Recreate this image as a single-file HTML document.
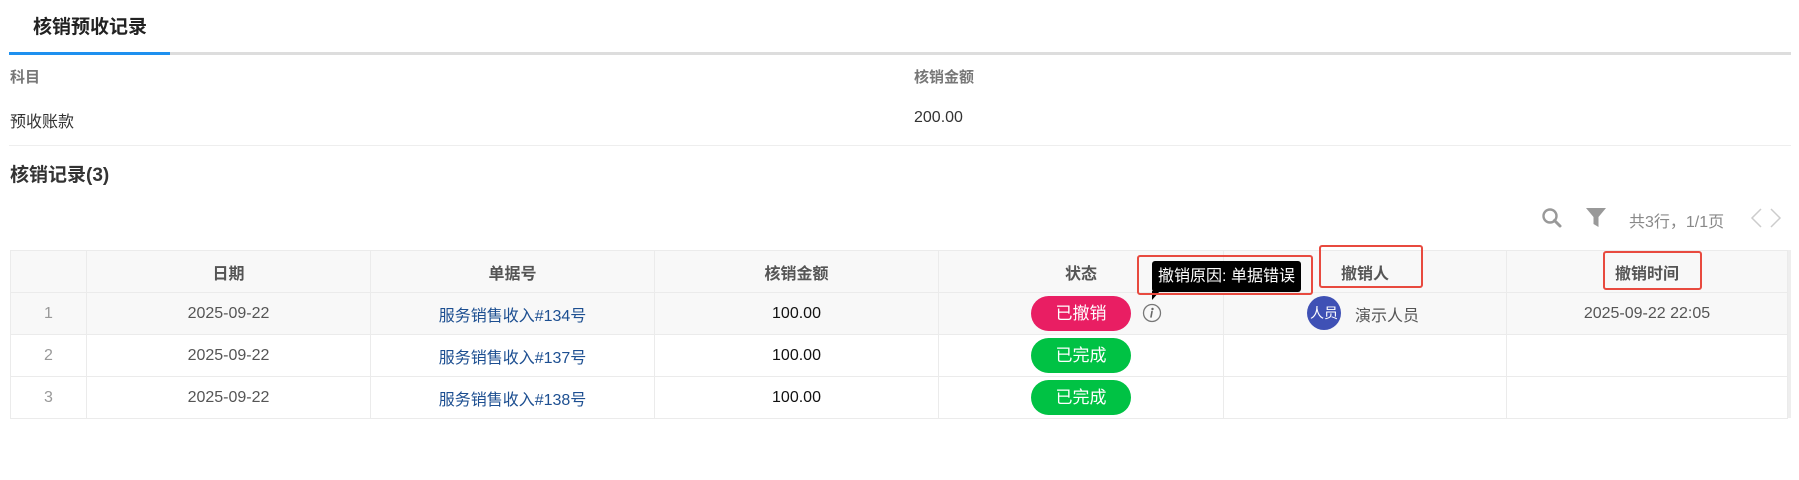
<!DOCTYPE html>
<html><head><meta charset="utf-8"><style>
*{margin:0;padding:0;box-sizing:border-box}
body{width:1799px;height:480px;background:#fff;font-family:"Liberation Sans","Noto Sans CJK SC",sans-serif;position:relative;overflow:hidden;color:#333}
.a{position:absolute;white-space:nowrap}
table{position:absolute;left:10px;top:250px;width:1777px;border-collapse:collapse;table-layout:fixed}
td,th{border:1px solid #ebebeb;height:42px;text-align:center;font-size:16px}
th{background:#f8f8f8;color:#555;font-weight:bold;font-size:16px}
tr.r1 td{background:#f8f8f8}
td.n{color:#999}
td.d{color:#555}
td.l{color:#1d4f91}
td.m{color:#111}
.b{display:inline-block;width:100px;height:35px;line-height:35px;border-radius:18px;color:#fff;font-size:17px}
.rb{position:absolute;border:2px solid #e84a3f;border-radius:3px}
</style></head><body>
<div class="a" style="left:33px;top:12px;font-size:19px;font-weight:bold;color:#222">核销预收记录</div>
<div class="a" style="left:9px;top:52px;width:1782px;height:3px;background:#ddd"></div>
<div class="a" style="left:9px;top:52px;width:161px;height:3px;background:#1e90ef"></div>
<div class="a" style="left:10px;top:66px;font-size:15px;font-weight:bold;color:#777">科目</div>
<div class="a" style="left:914px;top:66px;font-size:15px;font-weight:bold;color:#777">核销金额</div>
<div class="a" style="left:10px;top:108px;font-size:16px;color:#333">预收账款</div>
<div class="a" style="left:914px;top:109px;font-size:16px;color:#333">200.00</div>
<div class="a" style="left:9px;top:145px;width:1782px;height:1px;background:#eee"></div>
<div class="a" style="left:10px;top:160px;font-size:19px;font-weight:bold;color:#333">核销记录(3)</div>
<svg class="a" style="left:1540px;top:206px" width="24" height="24" viewBox="0 0 24 24"><circle cx="10" cy="10" r="6.5" fill="none" stroke="#999" stroke-width="2.4"/><path d="M14.5 14.5L20 20" stroke="#999" stroke-width="3" stroke-linecap="round"/></svg>
<svg class="a" style="left:1585px;top:207px" width="22" height="22" viewBox="0 0 22 22"><path d="M1 1H21L13.5 10V20L8.5 17V10Z" fill="#999"/></svg>
<div class="a" style="left:1629px;top:208px;font-size:16px;color:#888">共3行，1/1页</div>
<svg class="a" style="left:1748px;top:207px" width="36" height="22" viewBox="0 0 36 22"><path d="M13 2L4 11L13 20M23 2L32 11L23 20" fill="none" stroke="#ccc" stroke-width="1.5"/></svg>
<table>
<colgroup><col style="width:76px"><col style="width:284px"><col style="width:284px"><col style="width:284px"><col style="width:285px"><col style="width:283px"><col style="width:281px"></colgroup>
<tr><th></th><th>日期</th><th>单据号</th><th>核销金额</th><th>状态</th><th>撤销人</th><th>撤销时间</th></tr>
<tr class="r1"><td class="n">1</td><td class="d">2025-09-22</td><td class="l">服务销售收入#134号</td><td class="m">100.00</td><td><span class="b" style="background:#e91e63">已撤销</span></td><td></td><td class="d">2025-09-22 22:05</td></tr>
<tr><td class="n">2</td><td class="d">2025-09-22</td><td class="l">服务销售收入#137号</td><td class="m">100.00</td><td><span class="b" style="background:#00c244">已完成</span></td><td></td><td></td></tr>
<tr><td class="n">3</td><td class="d">2025-09-22</td><td class="l">服务销售收入#138号</td><td class="m">100.00</td><td><span class="b" style="background:#00c244">已完成</span></td><td></td><td></td></tr>
</table>
<div class="a" style="left:1788px;top:250px;width:3px;height:168px;background:#eee"></div>
<svg class="a" style="left:1142px;top:303px" width="20" height="20" viewBox="0 0 20 20"><circle cx="10" cy="10" r="8.5" fill="none" stroke="#777" stroke-width="1.3"/><circle cx="10.5" cy="6" r="1.2" fill="#666"/><path d="M10 8.5L9 14" stroke="#666" stroke-width="1.6" stroke-linecap="round"/></svg>
<div class="a" style="left:1152px;top:261px;width:149px;height:31px;background:#000;border-radius:3px;color:#fff;font-size:16px;line-height:31px;text-align:center">撤销原因: 单据错误</div>
<div class="a" style="left:1152px;top:291px;width:0;height:0;border-right:8px solid transparent;border-top:9px solid #000"></div>
<div class="a" style="left:1307px;top:296px;width:34px;height:34px;border-radius:50%;background:#3f51b5;color:#fff;font-size:14px;line-height:34px;text-align:center">人员</div>
<div class="a" style="left:1355px;top:302px;font-size:16px;color:#555">演示人员</div>
<div class="rb" style="left:1137px;top:255px;width:176px;height:40px"></div>
<div class="rb" style="left:1319px;top:245px;width:104px;height:43px"></div>
<div class="rb" style="left:1603px;top:251px;width:99px;height:39px"></div>
</body></html>
